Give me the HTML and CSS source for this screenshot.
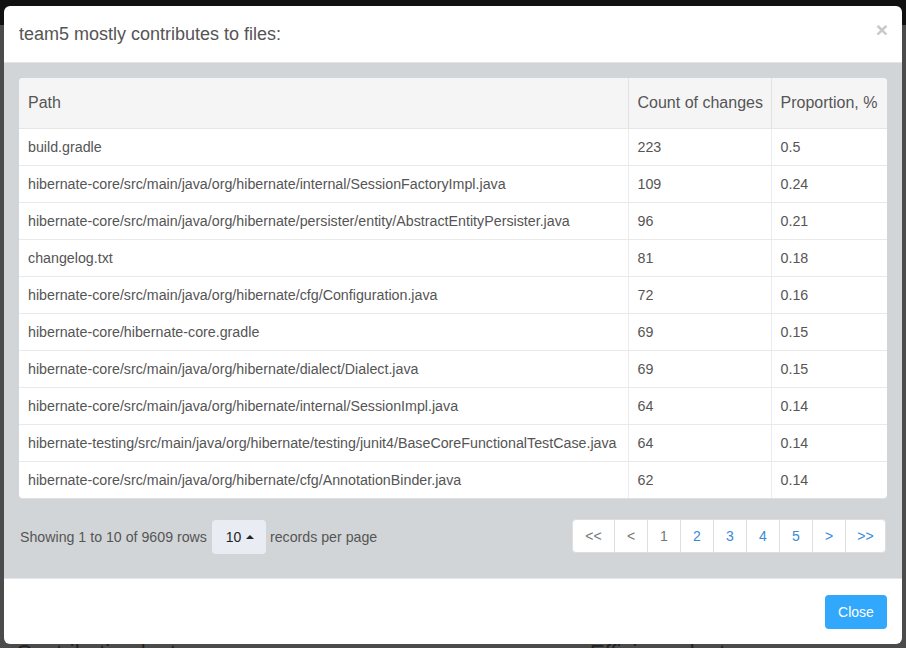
FILE: index.html
```html
<!DOCTYPE html>
<html>
<head>
<meta charset="utf-8">
<link rel="stylesheet" href="styles.css">
</head>
<body>
<div class="backdrop-top"></div>
<div class="backdrop-text">
  <span class="bt1">Contribution by team</span>
  <span class="bt2">Efficiency by team</span>
</div>
<div class="modal">
  <div class="modal-header">
    <h4 class="modal-title">team5 mostly contributes to files:</h4>
    <span class="close">×</span>
  </div>
  <div class="modal-body">
    <div class="table-card">
      <table class="files">
        <colgroup>
          <col class="c-path">
          <col class="c-count">
          <col class="c-prop">
        </colgroup>
        <thead>
          <tr><th>Path</th><th>Count of changes</th><th>Proportion, %</th></tr>
        </thead>
        <tbody>
          <tr><td>build.gradle</td><td>223</td><td>0.5</td></tr>
          <tr><td>hibernate-core/src/main/java/org/hibernate/internal/SessionFactoryImpl.java</td><td>109</td><td>0.24</td></tr>
          <tr><td>hibernate-core/src/main/java/org/hibernate/persister/entity/AbstractEntityPersister.java</td><td>96</td><td>0.21</td></tr>
          <tr><td>changelog.txt</td><td>81</td><td>0.18</td></tr>
          <tr><td>hibernate-core/src/main/java/org/hibernate/cfg/Configuration.java</td><td>72</td><td>0.16</td></tr>
          <tr><td>hibernate-core/hibernate-core.gradle</td><td>69</td><td>0.15</td></tr>
          <tr><td>hibernate-core/src/main/java/org/hibernate/dialect/Dialect.java</td><td>69</td><td>0.15</td></tr>
          <tr><td>hibernate-core/src/main/java/org/hibernate/internal/SessionImpl.java</td><td>64</td><td>0.14</td></tr>
          <tr><td>hibernate-testing/src/main/java/org/hibernate/testing/junit4/BaseCoreFunctionalTestCase.java</td><td>64</td><td>0.14</td></tr>
          <tr><td>hibernate-core/src/main/java/org/hibernate/cfg/AnnotationBinder.java</td><td>62</td><td>0.14</td></tr>
        </tbody>
      </table>
    </div>
    <div class="pager-row">
      <div class="page-info">
        <span>Showing 1 to 10 of 9609 rows</span>
        <span class="page-size">10 <span class="caret"></span></span>
        <span>records per page</span>
      </div>
      <ul class="pagination">
        <li class="muted">&lt;&lt;</li>
        <li class="muted">&lt;</li>
        <li class="active">1</li>
        <li>2</li>
        <li>3</li>
        <li>4</li>
        <li>5</li>
        <li>&gt;</li>
        <li>&gt;&gt;</li>
      </ul>
    </div>
  </div>
  <div class="modal-footer">
    <button class="btn-close">Close</button>
  </div>
</div>
</body>
</html>
```

FILE: styles.css
```css
html, body {
  margin: 0;
  padding: 0;
}
body {
  width: 906px;
  height: 648px;
  overflow: hidden;
  background: #4b4b4b;
  font-family: "Liberation Sans", Arial, sans-serif;
  color: #555;
  position: relative;
  padding: 6px 4px 0;
  box-sizing: border-box;
}
.backdrop-top {
  position: absolute;
  left: 0;
  top: 0;
  width: 906px;
  height: 25px;
  background: #111;
}
.backdrop-text {
  position: absolute;
  left: 0;
  top: 640px;
  width: 906px;
  font-size: 22px;
  line-height: 26px;
  color: #222;
}
.bt1 { position: absolute; left: 16px; }
.bt2 { position: absolute; left: 590px; }
.modal {
  position: relative;
  width: 898px;
  height: 638px;
  background: #fff;
  border-radius: 6px;
  overflow: hidden;
  display: flex;
  flex-direction: column;
}
.modal-header {
  height: 56px;
  flex: none;
  display: flex;
  align-items: center;
  justify-content: space-between;
  padding: 0 15px;
  border-bottom: 1px solid #e3e5e8;
}
.modal-title {
  margin: 0;
  font-size: 18px;
  font-weight: normal;
  color: #555;
  line-height: 20px;
  padding-bottom: 1px;
}
.close {
  font-size: 21px;
  font-weight: bold;
  color: #c8c8c8;
  line-height: 20px;
  margin-top: -8px;
  margin-right: -1px;
}
.modal-body {
  flex: none;
  height: 515px;
  box-sizing: border-box;
  background: #d2d5d8;
  padding: 15px;
}
.table-card {
  background: #fff;
  border-radius: 4px;
  overflow: hidden;
  border-bottom: 1px solid #e0e0e0;
}
.files {
  width: 868px;
  border-collapse: collapse;
  table-layout: fixed;
  font-size: 14.25px;
}
.c-path { width: 609px; }
.c-count { width: 143px; }
.c-prop { width: 116px; }
.files th {
  background: #f5f5f5;
  font-weight: normal;
  font-size: 16px;
  text-align: left;
  padding: 0 9px;
  height: 50px;
  box-sizing: border-box;
  border-bottom: 1px solid #e6e6e6;
  color: #555;
  white-space: nowrap;
}
.files th + th {
  border-left: 1px solid #e2e2e2;
}
.files td {
  padding: 0 9px;
  height: 37px;
  box-sizing: border-box;
  border-bottom: 1px solid #e9e9e9;
  white-space: nowrap;
  color: #555;
}
.files td + td {
  border-left: 1px solid #ececec;
}
.files tbody tr:last-child td {
  border-bottom: none;
}
.pager-row {
  display: flex;
  justify-content: space-between;
  align-items: center;
  margin-top: 20px;
  padding-left: 1px;
  padding-right: 1px;
}
.page-info {
  display: flex;
  align-items: center;
  font-size: 14.2px;
  color: #555;
  margin-top: 1px;
}
.page-size {
  display: inline-flex;
  align-items: center;
  justify-content: center;
  gap: 5px;
  width: 54px;
  height: 34px;
  margin: 0 4px 0 5px;
  background: #e9ecf3;
  border-radius: 4px;
  color: #212529;
  font-size: 14px;
  box-sizing: border-box;
  padding-left: 2px;
}
.caret {
  width: 0;
  height: 0;
  border-left: 4px solid transparent;
  border-right: 4px solid transparent;
  border-bottom: 4px solid #212529;
}
.pagination {
  list-style: none;
  margin: 0;
  padding: 0;
  display: flex;
  background: #fff;
  border: 1px solid #dedede;
  border-radius: 4px;
  height: 34px;
  box-sizing: border-box;
  margin-top: -1px;
}
.pagination li {
  width: 33px;
  display: flex;
  align-items: center;
  justify-content: center;
  font-size: 14px;
  color: #3a8ad6;
  border-left: 1px solid #dedede;
  box-sizing: border-box;
}
.pagination li:first-child {
  border-left: none;
  width: 41px;
}
.pagination li:last-child {
  width: 40px;
}
.pagination li.muted,
.pagination li.active {
  color: #777;
}
.modal-footer {
  flex: 1;
  display: flex;
  justify-content: flex-end;
  align-items: flex-start;
  padding: 16px 15px 0;
  border-top: 1px solid #e3e5e8;
}
.btn-close {
  width: 62px;
  height: 34px;
  background: #31a8fc;
  color: #fff;
  border: none;
  border-radius: 4px;
  font-family: "Liberation Sans", Arial, sans-serif;
  font-size: 14px;
  padding: 0;
}
```
